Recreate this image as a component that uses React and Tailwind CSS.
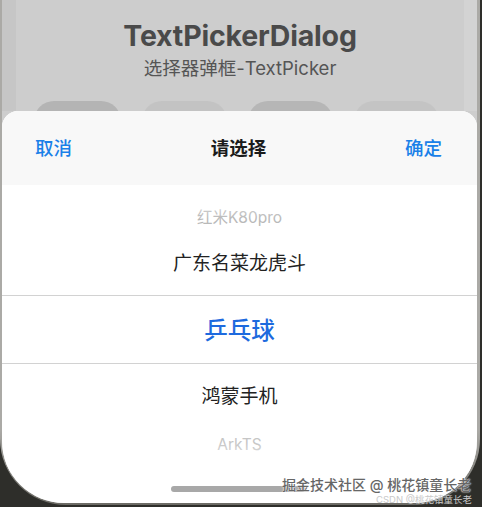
import React from "react";

const font = {
  fontFamily: '"Inter", "Noto Sans CJK SC", sans-serif',
};

function PickerRow({ children, className = "" }) {
  return (
    <div className={`flex items-center justify-center ${className}`}>{children}</div>
  );
}

export default function App() {
  return (
    <div
      className="relative w-[482px] h-[507px] overflow-hidden bg-[#2e2e2a]"
      style={font}
    >
      {/* bezel */}
      <div className="h-[505px] mr-[2px] bg-gradient-to-b from-[#abaaa6] from-85% to-[#6c6b65] rounded-b-[66px] pl-[2px] pr-[3px] pb-[2px]">
        {/* screen */}
        <div className="relative h-full bg-[#cdcdcd] rounded-b-[62px] overflow-hidden flex flex-col">
          {/* app behind the dimmed overlay */}
          <div className="h-[111px] shrink-0 flex overflow-hidden">
            <div className="w-[14px] bg-[#c6c6c6]" />
            <div className="flex-1 flex flex-col items-center">
              <div className="mt-[16px] text-[28.5px] leading-[40px] font-bold text-[#4a4a4a] tracking-[-0.2px]">
                TextPickerDialog
              </div>
              <div className="mt-[-2px] text-[18.5px] leading-[28px] text-[#555555]">
                选择器弹框-TextPicker
              </div>
              <div className="mt-[19px] w-full flex gap-[21px] pl-[18px]">
                <div className="w-[87px] h-[40px] rounded-full bg-[#b4b4b4]" />
                <div className="w-[85px] h-[40px] rounded-full bg-[#c3c3c3]" />
                <div className="w-[85px] h-[40px] rounded-full bg-[#b6b6b6]" />
                <div className="w-[85px] h-[40px] rounded-full bg-[#c4c4c4]" />
              </div>
            </div>
            <div className="w-[13px] bg-[#d3d3d3]" />
          </div>

          {/* bottom sheet */}
          <div className="flex-1 flex flex-col bg-white rounded-t-[16px] overflow-hidden">
            <div className="h-[74px] shrink-0 bg-[#f8f8f8] flex items-center justify-between pl-[33px] pr-[35px] pt-[2px] text-[18.5px] font-medium">
              <span className="text-[#1a80e8]">取消</span>
              <span className="text-[#1b1b1b] font-bold">请选择</span>
              <span className="text-[#1a80e8]">确定</span>
            </div>

            <div className="relative flex flex-col">
              <div className="h-[13px]" />
              <PickerRow className="h-[40px] text-[15.5px] text-[#b9b9b9]">
                红米K80pro
              </PickerRow>
              <PickerRow className="h-[57px] pb-[4px] text-[19px] text-[#222222]">
                广东名菜龙虎斗
              </PickerRow>
              <PickerRow className="h-[69px] pt-[2px] border-y border-[#d2d2d2] text-[23.5px] font-medium text-[#1d6ade]">
                乒乓球
              </PickerRow>
              <PickerRow className="h-[57px] pt-[10px] text-[19px] text-[#222222]">
                鸿蒙手机
              </PickerRow>
              <PickerRow className="h-[42px] pt-[6px] text-[15.5px] text-[#c6c6c6]">
                ArkTS
              </PickerRow>
              {/* wheel fade at the edges */}
              <div className="absolute left-0 right-0 top-0 h-[34px] bg-gradient-to-b from-white to-transparent" />
              <div className="absolute left-0 right-0 top-[258px] h-[30px] bg-gradient-to-t from-white to-transparent" />
            </div>
          </div>

          {/* home indicator */}
          <div className="absolute left-[169px] top-[486px] w-[134px] h-[6px] rounded-full bg-[#a8a8a8]" />
        </div>
      </div>

      {/* watermark */}
      <div className="absolute left-[282px] top-[475px] text-[14px] leading-[20px] font-medium text-[#666666] [text-shadow:0_0_1px_#fff,0_0_2px_#fff] whitespace-nowrap">
        掘金技术社区 @ 桃花镇童长老
      </div>
      <div className="absolute left-[376px] top-[494px] text-[9.5px] leading-[11px] text-[#c9c9c9] whitespace-nowrap">
        CSDN @桃花镇童长老
      </div>
    </div>
  );
}
